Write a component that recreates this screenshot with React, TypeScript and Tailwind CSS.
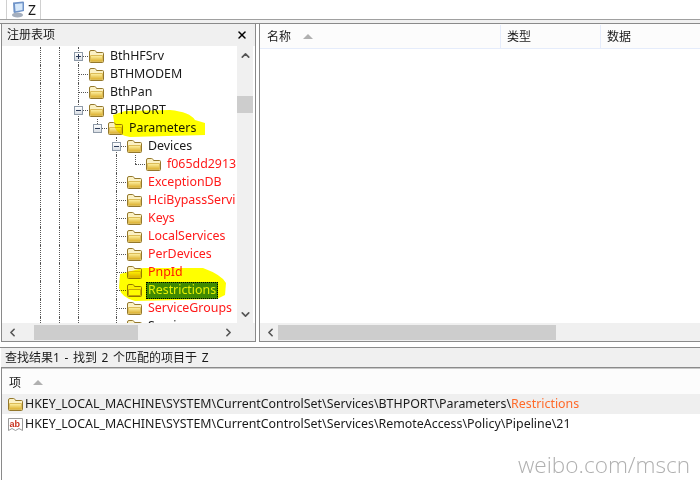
import { ChevronDown, ChevronLeft, ChevronRight, ChevronUp, X } from 'lucide-react';

type Row = {
  guides: number[];
  label: string;
  expander?: '+' | '-';
  depth: number;
  red?: boolean;
  selected?: boolean;
  last?: boolean;
};

const rows: Row[] = [
  { depth: 2, guides: [0, 1], label: 'BthHFSrv', expander: '+' },
  { depth: 2, guides: [0, 1], label: 'BTHMODEM' },
  { depth: 2, guides: [0, 1], label: 'BthPan' },
  { depth: 2, guides: [0, 1], label: 'BTHPORT', expander: '-' },
  { depth: 3, guides: [0, 1, 2], label: 'Parameters', expander: '-', last: true },
  { depth: 4, guides: [0, 1, 2], label: 'Devices', expander: '-' },
  { depth: 5, guides: [0, 1, 2, 4], label: 'f065dd2913', red: true, last: true },
  { depth: 4, guides: [0, 1, 2], label: 'ExceptionDB', red: true },
  { depth: 4, guides: [0, 1, 2], label: 'HciBypassServi', red: true },
  { depth: 4, guides: [0, 1, 2], label: 'Keys', red: true },
  { depth: 4, guides: [0, 1, 2], label: 'LocalServices', red: true },
  { depth: 4, guides: [0, 1, 2], label: 'PerDevices', red: true },
  { depth: 4, guides: [0, 1, 2], label: 'PnpId', red: true },
  { depth: 4, guides: [0, 1, 2], label: 'Restrictions', selected: true },
  { depth: 4, guides: [0, 1, 2], label: 'ServiceGroups', red: true },
  { depth: 4, guides: [0, 1, 2], label: 'Services' },
];

function Folder({ open }: { open?: boolean }) {
  return (
    <svg width="17" height="15" viewBox="0 0 17 15" className="shrink-0">
      <defs>
        <linearGradient id="folderFill" x1="0" y1="0" x2="0" y2="1">
          <stop offset="0" stopColor="#fff3a6" />
          <stop offset="1" stopColor="#dbae2c" />
        </linearGradient>
      </defs>
      <path d="M1.5 3 Q1.5 1.5 3 1.5 H6.5 Q7.5 1.5 8 2.5 L8.5 3.5 H14.5 Q15.5 3.5 15.5 4.5 V12.5 Q15.5 13.5 14.5 13.5 H2.5 Q1.5 13.5 1.5 12.5 Z" fill="#fbf1c4" stroke="#94782c" />
      <path d="M2.5 6.5 H14.5 V12.5 H2.5 Z" fill={open ? '#fffbe8' : 'url(#folderFill)'} stroke={open ? '#c9a94a' : '#dcbc58'} />
    </svg>
  );
}

function Expander({ kind }: { kind: '+' | '-' }) {
  return (
    <span className="absolute left-[5px] top-[5px] z-10 flex h-[9px] w-[9px] items-center justify-center border border-[#8e9aa8] bg-gradient-to-b from-white to-[#d9dee4]">
      <span className="absolute h-px w-[5px] bg-[#2b3a58]" />
      {kind === '+' && <span className="absolute h-[5px] w-px bg-[#2b3a58]" />}
    </span>
  );
}

function TreeRow({ row }: { row: Row }) {
  // indent columns are 19px wide, the guide runs down the middle of each one
  const cols = [0, 1, 2, 3, 4].slice(0, row.depth);
  return (
    <div className="flex h-[18px] shrink-0 items-center whitespace-nowrap">
      {cols.map((c) => (
        <span key={c} className="relative h-full w-[19px] shrink-0">
          {row.guides.includes(c) && (
            <span className="absolute left-[9px] top-0 h-full w-0 border-l border-dotted border-[#555]" />
          )}
        </span>
      ))}
      <span className="relative h-full w-[19px] shrink-0">
        <span className={`absolute left-[9px] top-0 w-0 border-l border-dotted border-[#555] ${row.last ? 'h-[9px]' : 'h-full'}`} />
        <span className="absolute left-[9px] top-[9px] h-0 w-[10px] border-t border-dotted border-[#555]" />
        {row.expander && <Expander kind={row.expander} />}
      </span>
      <Folder open={row.selected} />
      {row.selected ? (
        <span className="ml-[3px] flex h-[17px] items-center border border-dotted border-black bg-[#3f8a00] px-px text-[#e8f000]">
          {row.label}
        </span>
      ) : (
        <span className={`ml-[5px] ${row.red ? 'text-[#ff1a1a]' : 'text-[#1a1a1a]'}`}>{row.label}</span>
      )}
    </div>
  );
}

function HScroll({ thumbLeft, thumbWidth }: { thumbLeft: string; thumbWidth: string }) {
  return (
    <div className="flex h-[18px] shrink-0 items-center bg-[#f0f0f0]">
      <ChevronLeft size={13} strokeWidth={3} className="ml-[4px] shrink-0 text-[#555]" />
      <div className="relative mx-0 h-[15px] flex-1">
        <div className={`absolute top-0 h-full bg-[#cdcdcd] ${thumbLeft} ${thumbWidth}`} />
      </div>
    </div>
  );
}

export default function App() {
  return (
    <div
      className="relative flex h-[480px] w-[700px] flex-col overflow-hidden bg-white text-[12px] text-[#1a1a1a]"
      style={{ fontFamily: '"Noto Sans", "Noto Sans CJK SC", sans-serif' }}
    >
      {/* Tab strip */}
      <div className="flex h-[20px] shrink-0 border-b border-[#a0a0a0] pl-[6px]">
        <div className="flex h-[19px] w-[35px] items-center gap-[3px] border-x border-[#d0d0d0] bg-white pl-[4px]">
          <svg width="14" height="17" viewBox="0 0 14 17" className="shrink-0">
            <path d="M2 1.5 L12 0.5 Q13 0.5 13 1.5 V10 L4 12 Q2.5 12 2.5 11 Z" fill="#6f93c8" />
            <path d="M4 3 L11.5 2.2 V9 L4.5 10.2 Z" fill="#d6e8fa" />
            <ellipse cx="6.5" cy="14" rx="5.5" ry="2.5" fill="#a4aebd" />
          </svg>
          <span className="text-[14px] leading-none">Z</span>
        </div>
      </div>
      <div className="h-[3px] shrink-0 bg-[#f0f0f0]" />

      {/* Upper panes */}
      <div className="flex h-[319px] shrink-0 gap-[3px] border-t border-[#8a8a8a] pl-px">
        {/* Registry tree */}
        <div className="flex w-[255px] shrink-0 flex-col border-x border-b border-[#8a8a8a]">
          <div className="flex h-[22px] shrink-0 items-center justify-between bg-[#f0f0f0] pl-[5px] pr-[7px]">
            <span>注册表项</span>
            <X size={12} strokeWidth={3} className="text-black" />
          </div>
          <div className="flex min-h-0 flex-1">
            <div className="min-w-0 flex-1 overflow-hidden pl-[29px] pt-px text-[12.4px]">
              {rows.map((r) => (
                <TreeRow key={r.label} row={r} />
              ))}
            </div>
            <div className="flex w-[16px] shrink-0 flex-col items-center bg-[#f0f0f0]">
              <ChevronUp size={13} strokeWidth={3} className="mt-[3px] text-[#555]" />
              <div className="mt-[34px] h-[17px] w-full bg-[#cdcdcd]" />
              <ChevronDown size={13} strokeWidth={3} className="mb-[2px] mt-auto text-[#555]" />
            </div>
            <div className="w-[2px] shrink-0" />
          </div>
          <div className="relative">
            <HScroll thumbLeft="left-[15px]" thumbWidth="w-[104px]" />
            <ChevronRight size={13} strokeWidth={3} className="absolute left-[220px] top-[3px] text-[#555]" />
          </div>
        </div>

        {/* Value list */}
        <div className="flex min-w-0 flex-1 flex-col border-b border-l border-[#8a8a8a]">
          <div className="flex h-[25px] shrink-0 items-center border-b border-[#e5ecfb] bg-[#fcfcfc] pt-px">
            <div className="flex h-full w-[241px] shrink-0 items-center gap-[12px] border-r border-[#e5ecfb] pl-[7px]">
              <span>名称</span>
              <span className="h-0 w-0 border-x-[5px] border-b-[5px] border-x-transparent border-b-[#b0b0b0]" />
            </div>
            <div className="flex h-full w-[100px] shrink-0 items-center border-r border-[#e5ecfb] pl-[6px]">类型</div>
            <div className="pl-[6px]">数据</div>
          </div>
          <div className="flex-1" />
          <HScroll thumbLeft="left-[1px]" thumbWidth="w-[278px]" />
        </div>
      </div>

      {/* Find results */}
      <div className="mt-[5px] flex min-h-0 flex-1 flex-col border-t border-[#8a8a8a] pl-px">
        <div className="flex h-[20px] shrink-0 items-center border-b border-[#8a8a8a] bg-[#f0f0f0] pl-[4px] [word-spacing:1.5px]">
          查找结果1 - 找到 2 个匹配的项目于 Z
        </div>
        <div className="flex min-h-0 flex-1 flex-col border-l border-[#8a8a8a]">
          <div className="flex h-[26px] shrink-0 items-center gap-[12px] border-t border-[#c8c8c8] bg-[#fcfcfc] pl-[7px] pt-[2px]">
            <span>项</span>
            <span className="h-0 w-0 border-x-[5px] border-b-[5px] border-x-transparent border-b-[#b0b0b0]" />
          </div>
          <div className="flex h-[20px] shrink-0 items-center whitespace-nowrap bg-[#efefef] pl-[5px] pt-px text-[12.4px]">
            <Folder />
            <span className="ml-[1px]">
              {'HKEY_LOCAL_MACHINE\\SYSTEM\\CurrentControlSet\\Services\\BTHPORT\\Parameters\\'}
              <span className="text-[#ff6a2a]">Restrictions</span>
            </span>
          </div>
          <div className="flex h-[19px] shrink-0 items-center whitespace-nowrap pl-[5px] pt-px text-[12.4px]">
            <svg width="17" height="15" viewBox="0 0 17 15" className="shrink-0">
              <path d="M1.5 1.5 H15.5 V13.5 L12 11.5 L8.5 13.5 L5 11.5 L1.5 13.5 Z" fill="#fff" stroke="#9a9a9a" />
              <text x="2.5" y="9.5" fontSize="9" fontWeight="700" fill="#c8321e" fontFamily="Liberation Sans">ab</text>
            </svg>
            <span className="ml-[1px]">
              {'HKEY_LOCAL_MACHINE\\SYSTEM\\CurrentControlSet\\Services\\RemoteAccess\\Policy\\Pipeline\\21'}
            </span>
          </div>
        </div>
      </div>

      {/* Highlighter strokes */}
      <svg width="260" height="320" viewBox="0 0 260 320" className="pointer-events-none absolute left-0 top-0 mix-blend-multiply">
        <path d="M113 115 L125 111 L170 110 Q190 112 195 120 L205 123 L205 135 L130 137 Q118 135 115 128 Z" fill="#ffff00" />
        <path d="M143 268 L203 268 Q222 275 226 283 L225 295 L217 299 L135 301 Q122 298 119 288 L120 274 Z" fill="#ffff00" />
      </svg>

      {/* Watermark */}
      <span
        className="absolute left-[518px] top-[448px] text-[22.6px] font-light text-[#b0b0b0]"
        style={{ fontFamily: '"Open Sans", sans-serif' }}
      >
        weibo.com/mscn
      </span>
    </div>
  );
}
